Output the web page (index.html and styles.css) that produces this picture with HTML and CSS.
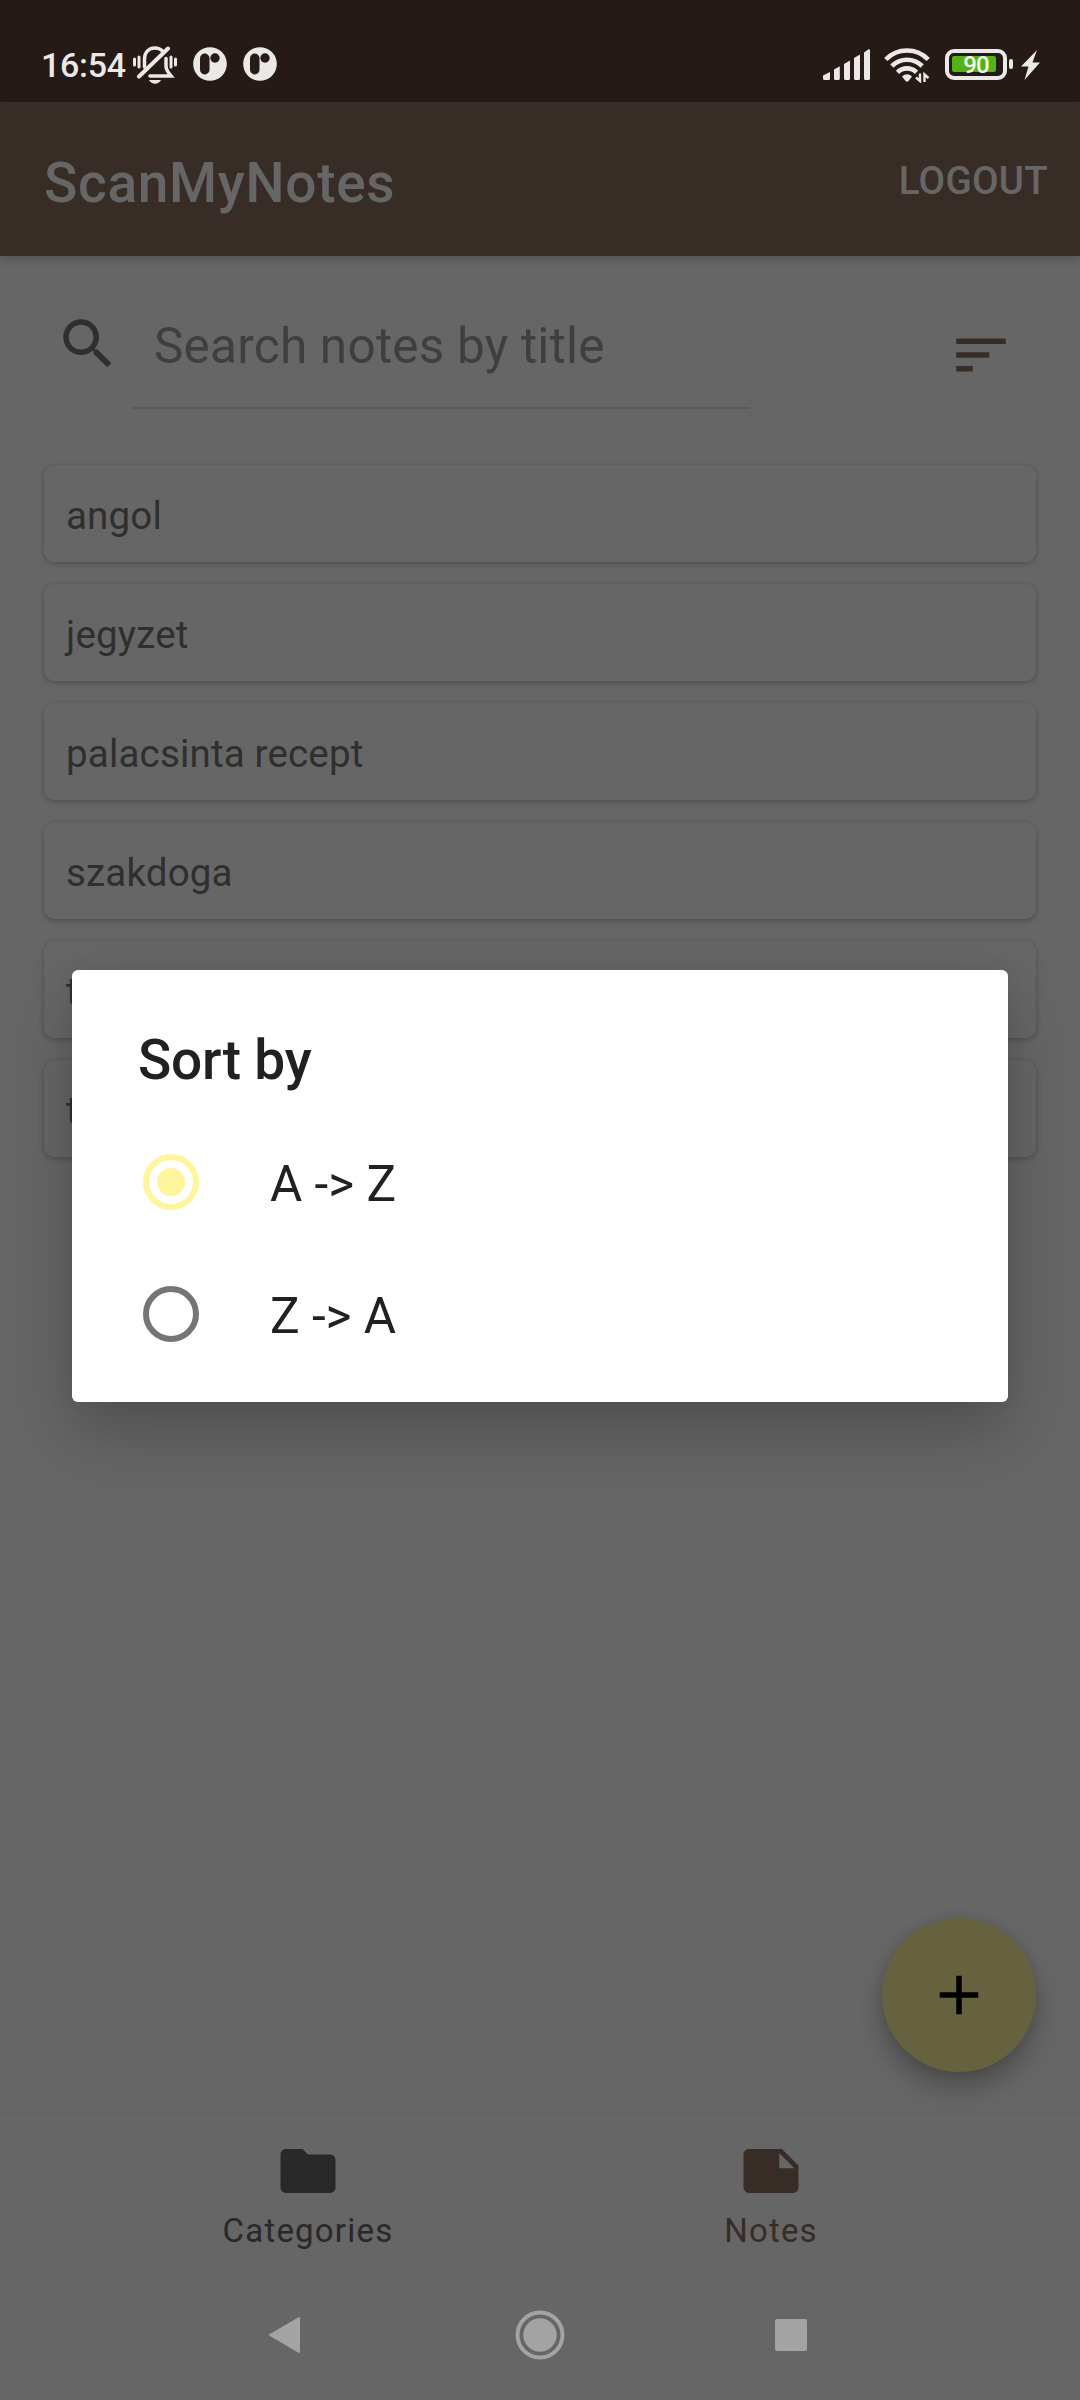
FILE: index.html
```html
<!DOCTYPE html>
<html lang="en">
<head>
<meta charset="utf-8">
<title>ScanMyNotes</title>
<link rel="stylesheet" href="styles.css">
</head>
<body>
<div class="phone">
  <div class="status-bg"></div>
  <header class="app-bar">
    <h1 class="app-title">ScanMyNotes</h1>
    <span class="logout">LOGOUT</span>
  </header>
  <main class="content">
    <div class="search-row">
      <svg class="search-icon" viewBox="0 0 24 24"><path d="M15.5 14h-.79l-.28-.27A6.471 6.471 0 0 0 16 9.5 6.5 6.5 0 1 0 9.5 16c1.61 0 3.09-.59 4.23-1.57l.27.28v.79l5 4.99L20.49 19l-4.99-5zm-6 0C7.01 14 5 11.99 5 9.5S7.01 5 9.5 5 14 7.01 14 9.5 11.99 14 9.5 14z"/></svg>
      <div class="search-field">Search notes by title</div>
      <svg class="sort-icon" viewBox="0 0 24 24"><path d="M3 18h6v-2H3v2zM3 6v2h18V6H3zm0 7h12v-2H3v2z"/></svg>
    </div>
    <ul class="notes">
      <li class="note">angol</li>
      <li class="note">jegyzet</li>
      <li class="note">palacsinta recept</li>
      <li class="note">szakdoga</li>
      <li class="note">t</li>
      <li class="note">t</li>
    </ul>
    <div class="fab"><svg class="fab-icon" viewBox="0 0 24 24"><path d="M19 13h-6v6h-2v-6H5v-2h6V5h2v6h6v2z"/></svg></div>
  </main>
  <nav class="tabs">
    <div class="tab">
      <svg class="tab-icon" viewBox="0 0 24 24"><path d="M10 4H4c-1.1 0-1.99.9-1.99 2L2 18c0 1.1.9 2 2 2h16c1.1 0 2-.9 2-2V8c0-1.1-.9-2-2-2h-8l-2-2z"/></svg>
      <span>Categories</span>
    </div>
    <div class="tab tab-active">
      <svg class="tab-icon" viewBox="0 0 24 24"><path fill-rule="evenodd" d="M16 4H4c-1.100 0-2 .9-2 2v12.010c0 1.100.9 1.990 2 1.990h16c1.100 0 2-.9 2-2v-8l-6-6zM15 5.500l5.500 5.500H15V5.500z"/></svg>
      <span>Notes</span>
    </div>
  </nav>
  <div class="system-space"></div>

  <div class="overlay">
    <div class="status-bar">
      <span class="clock">16:54</span>
      <svg class="bell" viewBox="0 0 44 38" fill="none" stroke="#ebe9e8" stroke-width="3" stroke-linecap="round">
        <path d="M1.500 13v6M6 11v10M38 11v10M42.500 13v6"/>
        <path d="M11.500 21v-8C11.500 6 16 2 22 2c3.200 0 5.500 1 7.500 3M33 12.500V20c0 4 2 6.500 5 10H17" stroke-width="3.500"/>
        <path d="M35 2.500 6 30.500" stroke-width="4"/>
        <path d="M16 34h12c-1.500 2.500-3.600 3.700-6 3.700S17.500 36.500 16 34z" fill="#ebe9e8" stroke="none"/>
      </svg>
      <svg class="app-dot" viewBox="0 0 34 34"><circle cx="17" cy="17" r="16.800" fill="#ebe9e8"/><rect x="7" y="6.500" width="9.500" height="21" rx="4.700" fill="#261b17"/><circle cx="22" cy="11" r="4.700" fill="#261b17"/></svg>
      <svg class="app-dot app-dot-last" viewBox="0 0 34 34"><circle cx="17" cy="17" r="16.800" fill="#ebe9e8"/><rect x="7" y="6.500" width="9.500" height="21" rx="4.700" fill="#261b17"/><circle cx="22" cy="11" r="4.700" fill="#261b17"/></svg>
      <svg class="signal" viewBox="0 0 48 31" fill="#ebe9e8"><path d="M0 26.500 7 23v6.500q0 1.500-1.500 1.500h-4Q0 31 0 29.500zM11 20.500l5.800-3.200v12.200q0 1.500-1.500 1.500h-2.800q-1.500 0-1.500-1.500zM21 15l6-3.500v18q0 1.500-1.500 1.500h-3q-1.500 0-1.500-1.500zM31 9l6-3.500v24q0 1.500-1.500 1.500h-3q-1.500 0-1.500-1.500zM41 3.500 45.500.3Q47 0 47 1.500v28q0 1.500-1.500 1.500h-3q-1.500 0-1.500-1.500z"/></svg>
      <svg class="wifi" viewBox="0 0 46 36" fill="none" stroke="#ebe9e8" stroke-width="4.600">
        <path d="M1.800 12.500a29.500 29.500 0 0 1 42.400 0M7.800 19a21.500 21.500 0 0 1 30.400 0M13.500 25.300a13.500 13.500 0 0 1 19 0"/>
        <path d="M18 29.500q5-4.500 10 0L24.500 34q-1.500 1.200-3 0z" fill="#ebe9e8" stroke="none"/>
        <path d="M36 26.500V34l-4-3.500M40.500 35v-7.500l4 3.500" stroke-width="2.400"/>
      </svg>
      <div class="battery"><div class="battery-fill"></div><span class="battery-text">90</span></div>
      <div class="battery-cap"></div>
      <svg class="bolt" viewBox="0 0 19 30"><path d="M16 0 0 16.500h7.500L3.500 30 19 12.500h-7.500z" fill="#ebe9e8"/></svg>
    </div>
    <section class="dialog">
      <h2 class="dialog-title">Sort by</h2>
      <div class="option"><span class="radio radio-on"></span><span class="option-text">A -&gt; Z</span></div>
      <div class="option"><span class="radio"></span><span class="option-text">Z -&gt; A</span></div>
    </section>
    <div class="system-nav">
      <svg class="nav-back" viewBox="0 0 33 40"><path d="M31 3v34L2 20z" fill="#a3a3a3" stroke="#a3a3a3" stroke-width="2" stroke-linejoin="round"/></svg>
      <svg class="nav-home" viewBox="0 0 50 50"><circle cx="25" cy="25" r="22.500" fill="none" stroke="#a3a3a3" stroke-width="4"/><circle cx="25" cy="25" r="16.700" fill="#a3a3a3"/></svg>
      <div class="nav-recent"></div>
    </div>
  </div>
</div>
</body>
</html>
```
FILE: styles.css
```css
* { box-sizing: border-box; }
body { margin: 0; font-family: Roboto, "Liberation Sans", sans-serif; }
svg { display: block; flex: none; }
h1, h2, ul { margin: 0; padding: 0; }

.phone {
  position: relative;
  width: 1080px;
  height: 2400px;
  display: flex;
  flex-direction: column;
  background: #fff;
  overflow: hidden;
}
.status-bg { height: 102px; background: #5f4339; }
.app-bar {
  height: 154px;
  padding: 0 32px 0 44px;
  display: flex;
  align-items: center;
  justify-content: space-between;
  background: #8d6e63;
  box-shadow: 0 3px 10px rgba(0, 0, 0, .2);
}
.app-title { font-size: 55px; font-weight: 500; line-height: 64px; letter-spacing: .7px; color: #fff; padding-top: 7px; }
.logout { font-size: 38.5px; font-weight: 500; line-height: 46px; letter-spacing: .3px; color: #fff; padding-top: 4px; }

.content { position: relative; flex: 1; }
.search-row {
  display: flex;
  align-items: flex-start;
  height: 209px;
  padding: 55px 66px 0 55px;
}
.search-icon { width: 66px; height: 66px; fill: #757575; }
.search-field {
  width: 618px;
  height: 98px;
  margin-left: 11px;
  padding: 6px 0 0 22px;
  font-size: 49.5px;
  line-height: 58px;
  letter-spacing: .22px;
  color: #9e9e9e;
  border-bottom: 2px solid #e0e0e0;
}
.sort-icon { width: 66px; height: 66px; margin: 11px 0 0 auto; fill: #8d6e63; }

.notes { display: flex; flex-direction: column; gap: 22px; padding: 0 44px; list-style: none; }
.note {
  height: 97px;
  padding: 3px 22px 0;
  border-radius: 11px;
  background: #fff;
  box-shadow: 0 2px 6px rgba(0, 0, 0, .22), 0 0 2px rgba(0, 0, 0, .08);
  font-size: 38.5px;
  line-height: 95px;
  letter-spacing: .18px;
  color: #757575;
}
.fab {
  position: absolute;
  right: 44px;
  bottom: 43px;
  width: 154px;
  height: 154px;
  display: flex;
  align-items: center;
  justify-content: center;
  border-radius: 50%;
  background: #fff59d;
  box-shadow: 0 16px 28px rgba(0, 0, 0, .26), 0 0 12px rgba(0, 0, 0, .1);
}
.fab-icon { width: 66px; height: 66px; }

.tabs {
  height: 154px;
  padding: 0 78px 0 76px;
  display: flex;
  background: #fff;
  box-shadow: 0 -1px 3px rgba(0, 0, 0, .05);
}
.tab {
  flex: 1;
  display: flex;
  flex-direction: column;
  align-items: center;
  padding-top: 23px;
  font-size: 33px;
  line-height: 40px;
  letter-spacing: 1.2px;
  color: #666;
}
.tab span { margin-top: 7px; padding-left: 1px; }
.tab-active { color: #8d6e63; }
.tab-icon { width: 66px; height: 66px; fill: currentColor; }
.system-space { height: 131px; }

.overlay {
  position: absolute;
  inset: 0;
  display: flex;
  flex-direction: column;
  align-items: center;
  justify-content: space-between;
  background: rgba(0, 0, 0, .6);
}
.status-bar {
  width: 100%;
  height: 102px;
  padding: 26px 40px 0 41px;
  display: flex;
  align-items: flex-start;
}
.clock { width: 92px; padding-top: 18px; font-size: 34px; font-weight: 500; line-height: 42px; letter-spacing: -.3px; color: #ebe9e8; }
.bell { width: 44px; height: 38px; margin-top: 20px; }
.app-dot { width: 34px; height: 34px; margin: 21px 0 0 16px; }
.app-dot-last { margin-right: auto; }
.signal { width: 48px; height: 31px; margin: 23px 13px 0 0; }
.wifi { width: 46px; height: 36px; margin: 21px 15px 0 0; }
.battery {
  position: relative;
  width: 62px;
  height: 31px;
  margin-top: 23px;
  padding: 3px;
  border: 4px solid #ebe9e8;
  border-radius: 9px;
}
.battery-fill { width: 44px; height: 16px; border-radius: 2px; background: #50b415; }
.battery-text {
  position: absolute;
  inset: 0;
  font-size: 24px;
  font-weight: 500;
  line-height: 24px;
  letter-spacing: -.8px;
  text-align: center;
  color: #f4fbef;
}
.battery-cap { width: 4px; height: 10px; margin: 33px 8px 0 2px; border-radius: 2px; background: #ebe9e8; }
.bolt { width: 19px; height: 30px; margin-top: 24px; }

.dialog {
  width: 936px;
  height: 432px;
  border-radius: 6px;
  background: #fff;
  box-shadow: 0 30px 66px rgba(0, 0, 0, .22), 0 0 22px rgba(0, 0, 0, .04);
}
.dialog-title { height: 146px; padding: 58px 66px 0; font-size: 55px; font-weight: 500; line-height: 64px; letter-spacing: -.2px; color: #212121; }
.option { height: 132px; display: flex; align-items: center; padding-left: 71px; font-size: 49.5px; color: #212121; }
.option-text { padding-top: 3px; }
.radio {
  width: 56px;
  height: 56px;
  margin-right: 71px;
  display: flex;
  align-items: center;
  justify-content: center;
  border: 6px solid #757575;
  border-radius: 50%;
}
.radio-on { border-color: #fff59d; }
.radio-on::before { content: ""; width: 28px; height: 28px; border-radius: 50%; background: #fff59d; }

.system-nav {
  width: 100%;
  height: 130px;
  padding: 0 273px 0 268px;
  display: grid;
  grid-template-columns: 247px 50px 1fr;
  align-items: center;
}
.nav-back { width: 33px; height: 40px; }
.nav-home { width: 50px; height: 50px; }
.nav-recent { width: 32px; height: 32px; border-radius: 2px; background: #a3a3a3; justify-self: end; }
```
